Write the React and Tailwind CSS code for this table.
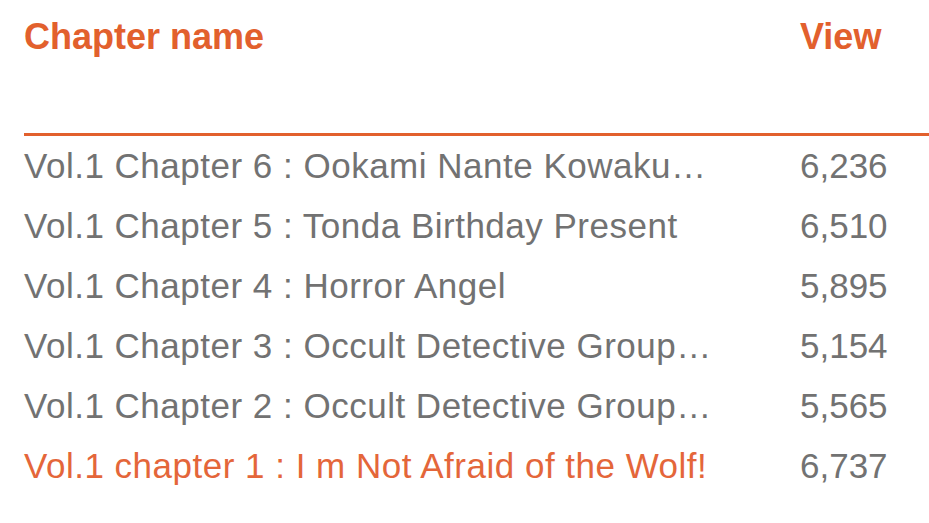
export default function App() {
  const rows = [
    ["Vol.1 Chapter 6 : Ookami Nante Kowaku…", "6,236", false],
    ["Vol.1 Chapter 5 : Tonda Birthday Present", "6,510", false],
    ["Vol.1 Chapter 4 : Horror Angel", "5,895", false],
    ["Vol.1 Chapter 3 : Occult Detective Group…", "5,154", false],
    ["Vol.1 Chapter 2 : Occult Detective Group…", "5,565", false],
    ["Vol.1 chapter 1 : I m Not Afraid of the Wolf!", "6,737", true],
  ];
  return (
    <div className="w-[929px] h-[523px] bg-white overflow-hidden" style={{ fontFamily: '"Liberation Sans", Arial, sans-serif' }}>
      <div className="pl-[24px] h-[133px] pt-[19px] grid grid-cols-[776px_1fr] text-[36px] leading-[36px] font-bold text-[#e2602d]">
        <div>Chapter name</div>
        <div>View</div>
      </div>
      <div className="ml-[24px] h-[3px] bg-[#e2602d]" />
      <div className="pl-[24px]">
        {rows.map(([name, views, hl], i) => (
          <div key={i} className="grid grid-cols-[776px_1fr] h-[60px] text-[35px] leading-[60px] whitespace-nowrap">
            <div className={"tracking-[0.5px] " + (hl ? "text-[#e4663a]" : "text-[#727272]")}>{name}</div>
            <div className="text-[#727272]">{views}</div>
          </div>
        ))}
      </div>
    </div>
  );
}
